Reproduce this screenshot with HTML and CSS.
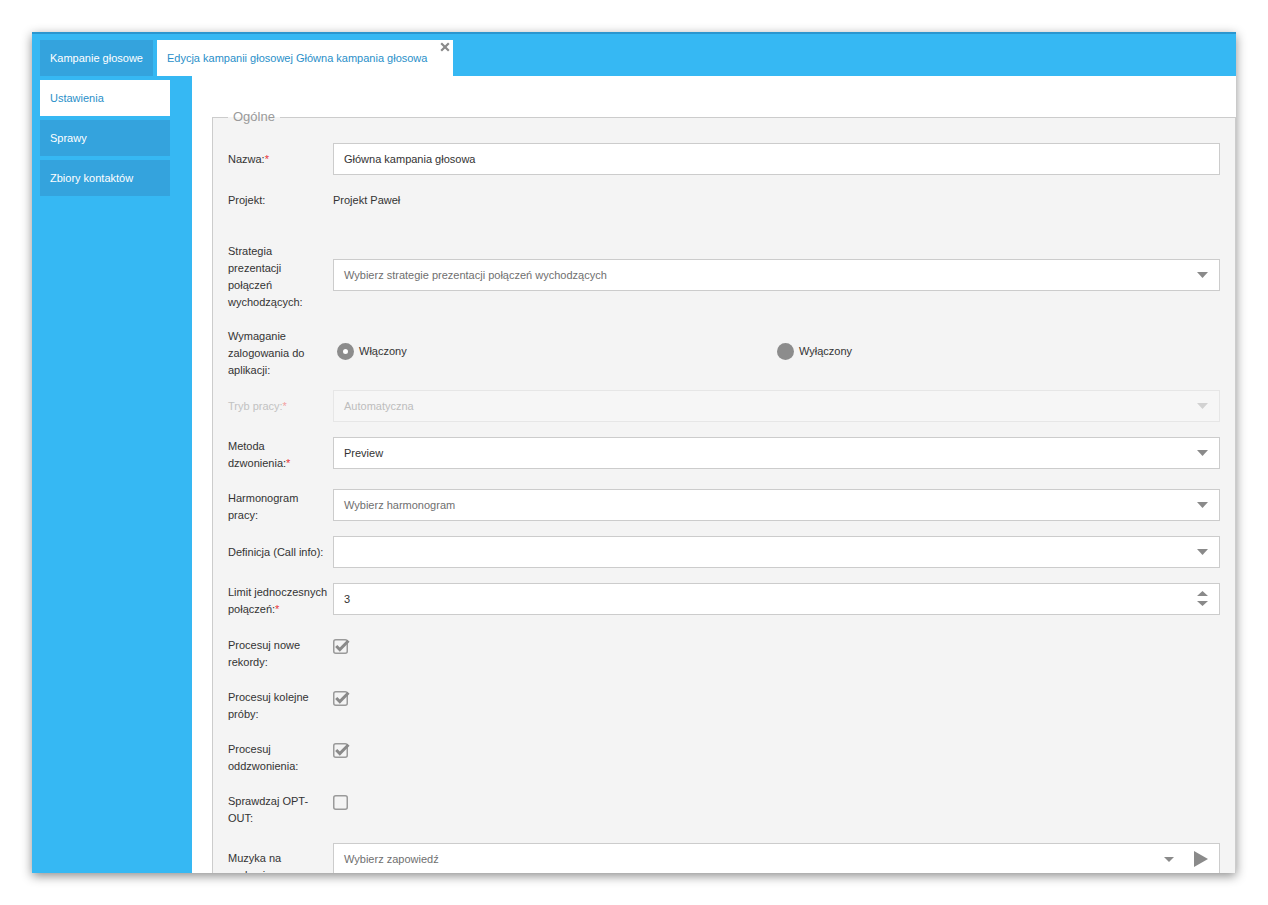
FILE: index.html
```html
<!DOCTYPE html>
<html lang="pl">
<head>
<meta charset="utf-8">
<title>Edycja kampanii głosowej</title>
<link rel="stylesheet" href="styles.css">
</head>
<body>
<div class="window">
  <div class="tabbar">
    <div class="tab">Kampanie głosowe</div>
    <div class="tab tab-active">Edycja kampanii głosowej Główna kampania głosowa
      <svg class="tab-close" width="10" height="10" viewBox="0 0 10 10"><path d="M1.2 1.2 L8.8 8.8 M8.8 1.2 L1.2 8.8" stroke="#8a8a8a" stroke-width="2.2" fill="none"/></svg>
    </div>
  </div>
  <div class="side">
    <div class="nav-item nav-active">Ustawienia</div>
    <div class="nav-item">Sprawy</div>
    <div class="nav-item">Zbiory kontaktów</div>
  </div>
  <div class="main">
    <fieldset class="box">
      <legend>Ogólne</legend>

      <div class="row">
        <div class="lbl">Nazwa:<span class="req">*</span></div>
        <div class="ctrl"><div class="input">Główna kampania głosowa</div></div>
      </div>

      <div class="row row-text mt-9">
        <div class="lbl">Projekt:</div>
        <div class="ctrl">Projekt Paweł</div>
      </div>

      <div class="row mt-22">
        <div class="lbl multi">Strategia<br>prezentacji<br>połączeń<br>wychodzących:</div>
        <div class="ctrl"><div class="input ph">Wybierz strategie prezentacji połączeń wychodzących
          <svg class="caret" width="11" height="6" viewBox="0 0 11 6"><path d="M0 0 H11 L5.5 6 Z" fill="#8a8a8a"/></svg></div></div>
      </div>

      <div class="row mt-12">
        <div class="lbl multi">Wymaganie<br>zalogowania do<br>aplikacji:</div>
        <div class="ctrl radios">
          <div class="radio"><span class="dot dot-on"></span>Włączony</div>
          <div class="radio"><span class="dot"></span>Wyłączony</div>
        </div>
      </div>

      <div class="row mt-11 disabled">
        <div class="lbl">Tryb pracy:<span class="req">*</span></div>
        <div class="ctrl"><div class="input">Automatyczna
          <svg class="caret" width="11" height="6" viewBox="0 0 11 6"><path d="M0 0 H11 L5.5 6 Z" fill="#d2d2d2"/></svg></div></div>
      </div>

      <div class="row mt-11">
        <div class="lbl multi">Metoda<br>dzwonienia:<span class="req">*</span></div>
        <div class="ctrl"><div class="input">Preview
          <svg class="caret" width="11" height="6" viewBox="0 0 11 6"><path d="M0 0 H11 L5.5 6 Z" fill="#8a8a8a"/></svg></div></div>
      </div>

      <div class="row mt-13">
        <div class="lbl multi">Harmonogram<br>pracy:</div>
        <div class="ctrl"><div class="input ph">Wybierz harmonogram
          <svg class="caret" width="11" height="6" viewBox="0 0 11 6"><path d="M0 0 H11 L5.5 6 Z" fill="#8a8a8a"/></svg></div></div>
      </div>

      <div class="row mt-12">
        <div class="lbl">Definicja (Call info):</div>
        <div class="ctrl"><div class="input">
          <svg class="caret" width="11" height="6" viewBox="0 0 11 6"><path d="M0 0 H11 L5.5 6 Z" fill="#8a8a8a"/></svg></div></div>
      </div>

      <div class="row mt-11">
        <div class="lbl multi">Limit jednoczesnych<br>połączeń:<span class="req">*</span></div>
        <div class="ctrl"><div class="input">3
          <svg class="caret spin" width="11" height="16" viewBox="0 0 11 16"><path d="M0 5 H11 L5.5 0 Z M0 10 H11 L5.5 15 Z" fill="#8a8a8a"/></svg></div></div>
      </div>

      <div class="row row-top mt-19">
        <div class="lbl">Procesuj nowe<br>rekordy:</div>
        <div class="ctrl"><svg class="check" width="18" height="16" viewBox="0 0 18 16"><rect x="0.75" y="0.75" width="13.5" height="13.5" rx="2" fill="none" stroke="#9a9a9a" stroke-width="1.5"/><path d="M3.2 7 L6.8 10.6 L15.5 1.8" fill="none" stroke="#8a8a8a" stroke-width="3"/></svg></div>
      </div>

      <div class="row row-top mt-18">
        <div class="lbl">Procesuj kolejne<br>próby:</div>
        <div class="ctrl"><svg class="check" width="18" height="16" viewBox="0 0 18 16"><rect x="0.75" y="0.75" width="13.5" height="13.5" rx="2" fill="none" stroke="#9a9a9a" stroke-width="1.5"/><path d="M3.2 7 L6.8 10.6 L15.5 1.8" fill="none" stroke="#8a8a8a" stroke-width="3"/></svg></div>
      </div>

      <div class="row row-top mt-18">
        <div class="lbl">Procesuj<br>oddzwonienia:</div>
        <div class="ctrl"><svg class="check" width="18" height="16" viewBox="0 0 18 16"><rect x="0.75" y="0.75" width="13.5" height="13.5" rx="2" fill="none" stroke="#9a9a9a" stroke-width="1.5"/><path d="M3.2 7 L6.8 10.6 L15.5 1.8" fill="none" stroke="#8a8a8a" stroke-width="3"/></svg></div>
      </div>

      <div class="row row-top mt-18">
        <div class="lbl">Sprawdzaj OPT-<br>OUT:</div>
        <div class="ctrl"><svg class="check" width="18" height="16" viewBox="0 0 18 16"><rect x="0.75" y="0.75" width="13.5" height="13.5" rx="2" fill="none" stroke="#9a9a9a" stroke-width="1.5"/></svg></div>
      </div>

      <div class="row row-top mt-16">
        <div class="lbl lbl-low">Muzyka na<br>czekanie:</div>
        <div class="ctrl"><div class="input ph">Wybierz zapowiedź
          <svg class="caret" width="10" height="5" viewBox="0 0 10 5"><path d="M0 0 H10 L5 5 Z" fill="#8a8a8a"/></svg>
          <svg class="play" width="14" height="16" viewBox="0 0 14 16"><path d="M0 0 L14 8 L0 16 Z" fill="#8a8a8a"/></svg></div></div>
      </div>
    </fieldset>
  </div>
</div>
</body>
</html>
```

FILE: styles.css
```css
html, body {
  margin: 0;
  background: #ffffff;
}

body {
  padding: 32px;
  font-family: "Liberation Sans", Arial, sans-serif;
  font-size: 11px;
  color: #333333;
}

.window {
  width: 1204px;
  height: 841px;
  box-sizing: border-box;
  background: #36b8f3;
  border-top: 2px solid #2b96cf;
  display: grid;
  grid-template-columns: 160px 1fr;
  grid-template-rows: 42px 1fr;
  overflow: hidden;
  box-shadow: 0 3px 10px rgba(0, 0, 0, 0.45);
}

.tabbar {
  grid-column: 1 / 3;
  display: flex;
  gap: 4px;
  padding: 6px 0 0 8px;
}

.tab {
  height: 36px;
  line-height: 36px;
  padding: 0 10px;
  background: #34a3dd;
  color: #ffffff;
  white-space: nowrap;
}

.tab-active {
  position: relative;
  background: #ffffff;
  color: #2a8fc9;
  padding-right: 26px;
}

.tab-close {
  position: absolute;
  top: 2px;
  right: 3px;
}

.side {
  padding: 4px 0 0 8px;
}

.nav-item {
  width: 130px;
  height: 36px;
  line-height: 36px;
  box-sizing: border-box;
  padding-left: 10px;
  margin-bottom: 4px;
  background: #34a3dd;
  color: #ffffff;
}

.nav-active {
  background: #ffffff;
  color: #2a8fc9;
}

.main {
  background: #ffffff;
  padding: 33px 0 0 20px;
  min-width: 0;
  overflow: hidden;
}

.box {
  margin: 0;
  width: 100%;
  box-sizing: border-box;
  border: 1px solid #cccccc;
  background: #f4f4f4;
  padding: 18px 15px 40px;
  min-width: 0;
}

.box legend {
  padding: 0 5px;
  font-size: 13px;
  line-height: 16px;
  color: #9a9a9a;
}

.row {
  display: flex;
  align-items: center;
}

.row-text {
  min-height: 32px;
}

.row-top {
  align-items: flex-start;
}

.mt-9 { margin-top: 9px; }
.mt-11 { margin-top: 11px; }
.mt-12 { margin-top: 12px; }
.mt-13 { margin-top: 13px; }
.mt-16 { margin-top: 16px; }
.mt-18 { margin-top: 18px; }
.mt-19 { margin-top: 19px; }
.mt-22 { margin-top: 22px; }

.lbl {
  width: 105px;
  flex: none;
  line-height: 17px;
  color: #333333;
}

.lbl.multi {
  padding-top: 5px;
}

.lbl-low {
  margin-top: 7px;
}

.req {
  color: #e8343a;
}

.ctrl {
  flex: 1;
  min-width: 0;
}

.input {
  height: 32px;
  box-sizing: border-box;
  border: 1px solid #cccccc;
  background: #ffffff;
  padding: 0 11px 0 10px;
  display: flex;
  align-items: center;
  color: #333333;
}

.input.ph {
  color: #6f6f6f;
}

.caret {
  margin-left: auto;
  flex: none;
}

.play {
  margin-left: 20px;
  flex: none;
}

.disabled .lbl {
  color: #c2c2c2;
}

.disabled .req {
  color: #f2a0a0;
}

.disabled .input {
  background: #f6f6f6;
  border-color: #e6e6e6;
  color: #bdbdbd;
}

.radios {
  display: grid;
  grid-template-columns: 440px 1fr;
}

.radio {
  display: flex;
  align-items: center;
  gap: 5px;
  padding-left: 4px;
}

.dot {
  width: 17px;
  height: 17px;
  box-sizing: border-box;
  border-radius: 50%;
  background: #8c8c8c;
}

.dot-on {
  background: #ffffff;
  border: 6px solid #8c8c8c;
}

.check {
  display: block;
  margin-top: 2px;
  overflow: visible;
}
```
